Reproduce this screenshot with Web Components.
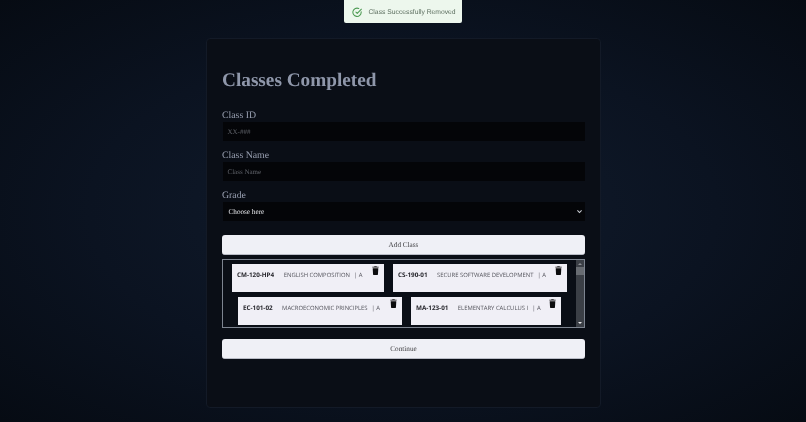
<!DOCTYPE html>
<html lang="en">
<head>
<meta charset="utf-8">
<title>Classes Completed</title>
<style>
  html, body { margin: 0; height: 422px; overflow: hidden; }
  body {
    background: radial-gradient(ellipse at center, #111c2d 0%, #0b1321 55%, #060b13 100%);
    font-family: "Liberation Serif", serif;
    text-rendering: geometricPrecision;
  }
  /* the reference is a soft, downscaled capture */
  toast-note, classes-form { filter: blur(0.3px); }
</style>
</head>
<body>
<toast-note>Class Successfully Removed</toast-note>
<classes-form></classes-form>

<script>
class ToastNote extends HTMLElement {
  constructor() {
    super();
    this.attachShadow({ mode: 'open' });
    this.shadowRoot.innerHTML = `
      <style>
        :host {
          position: absolute; top: 0; left: 344px;
          width: 118px; height: 23px; box-sizing: border-box;
          display: flex; align-items: center; gap: 6px; padding: 1px 0 0 8px;
          background: #edf7ed; border-radius: 0 0 2px 2px;
          font: 6.75px "Liberation Sans", sans-serif; color: #5d6f60;
        }
        svg { width: 10.5px; height: 10.5px; flex: none; }
      </style>
      <svg viewBox="0 0 24 24" fill="none" stroke="#4c9a52" stroke-width="2.4" stroke-linecap="round" stroke-linejoin="round">
        <path d="M21 11v1a9.5 9.5 0 1 1-5.6-8.6"/>
        <path d="M21.5 5 12 14.5l-3-3"/>
      </svg>
      <slot></slot>`;
  }
}

class ClassChip extends HTMLElement {
  constructor() {
    super();
    this.attachShadow({ mode: 'open' });
    this.shadowRoot.innerHTML = `
      <style>
        :host {
          display: flex; flex: none; position: relative; box-sizing: border-box;
          height: 28px; padding: 7px 0 0 5px;
          background: #f0eff6;
          font: 5.9px/8px "Open Sans", sans-serif; color: #54545c;
          white-space: nowrap;
        }
        b { color: #26262c; font-size: 6.3px; font-weight: 700; margin-right: 9.5px; }
        i { font-style: normal; margin-left: 4px; }
        svg { position: absolute; top: 2px; right: 5px; width: 7px; height: 9px; }
      </style>
      <b></b><span></span><i></i>
      <svg viewBox="0 0 8 10" fill="#0c0c0e"><path d="M2.8 0h2.4l.4.7H7.6V1.7H.4V.7h2zM.8 2.3h6.4l-.4 7.2q-.1.5-.6.5H1.8q-.5 0-.6-.5z"/></svg>`;
  }
  connectedCallback() {
    this.style.width = this.getAttribute('w') + 'px';
    this.shadowRoot.querySelector('b').textContent = this.getAttribute('code');
    this.shadowRoot.querySelector('span').textContent = this.getAttribute('name');
    this.shadowRoot.querySelector('i').textContent = '| ' + this.getAttribute('grade');
  }
}

class FormField extends HTMLElement {
  constructor() {
    super();
    this.attachShadow({ mode: 'open' });
    this.shadowRoot.innerHTML = `
      <style>
        :host { display: block; margin-bottom: 7px; padding-top: 1px; }
        label { display: block; font-size: 9.8px; line-height: 13px; color: #9aa1b2; }
        .box {
          height: 19px; margin-left: 1px; box-sizing: border-box; padding: 0 4.5px;
          display: flex; align-items: center; justify-content: space-between;
          background: #040508; font-size: 7px; color: #5f6269;
        }
        .box.select { color: #e4e6ea; font-size: 7.2px; padding: 0 2px 0 5.5px; }
        svg { width: 7px; height: 7px; }
      </style>
      <label></label>
      <div class="box"><span></span></div>`;
  }
  connectedCallback() {
    this.shadowRoot.querySelector('label').textContent = this.getAttribute('label');
    this.shadowRoot.querySelector('span').textContent = this.getAttribute('hint');
    if (this.hasAttribute('select')) {
      const box = this.shadowRoot.querySelector('.box');
      box.classList.add('select');
      box.insertAdjacentHTML('beforeend', '<svg viewBox="0 0 10 10" fill="none" stroke="#c8ccd2" stroke-width="1.6"><path d="M2 3.5 5 6.5 8 3.5"/></svg>');
    }
  }
}

class LightButton extends HTMLElement {
  constructor() {
    super();
    this.attachShadow({ mode: 'open' });
    this.shadowRoot.innerHTML = `
      <style>
        :host {
          display: flex; align-items: center; justify-content: center;
          height: 19px; border-radius: 3px;
          background: #eff0f6; border-bottom: 1px solid #b9bcc6;
          font-size: 7.2px; color: #3f3f42;
        }
      </style>
      <slot></slot>`;
  }
}

class ClassList extends HTMLElement {
  constructor() {
    super();
    this.attachShadow({ mode: 'open' });
    this.shadowRoot.innerHTML = `
      <style>
        :host {
          display: flex; height: 69px; box-sizing: border-box;
          border: 1px solid #7d8490; overflow: hidden;
        }
        .items { flex: 1; display: flex; flex-direction: column; gap: 5px; padding-top: 4px; }
        .row { display: flex; justify-content: center; gap: 9px; }
        .bar { width: 8px; flex: none; position: relative; background: #3b3f46; }
        .thumb { margin-top: 7px; height: 8px; background: #686c72; }
        .bar::before, .bar::after {
          content: ""; position: absolute; left: 2px;
          border-left: 2px solid transparent; border-right: 2px solid transparent;
        }
        .bar::before { top: 3px; border-bottom: 2px solid #8b8e94; }
        .bar::after { bottom: 3px; border-top: 2px solid #e8e8ea; }
      </style>
      <div class="items">
        <div class="row">
          <class-chip w="152" code="CM-120-HP4" name="ENGLISH COMPOSITION" grade="A"></class-chip>
          <class-chip w="174" code="CS-190-01" name="SECURE SOFTWARE DEVELOPMENT" grade="A"></class-chip>
        </div>
        <div class="row">
          <class-chip w="164" code="EC-101-02" name="MACROECONOMIC PRINCIPLES" grade="A"></class-chip>
          <class-chip w="150" code="MA-123-01" name="ELEMENTARY CALCULUS I" grade="A"></class-chip>
        </div>
      </div>
      <div class="bar"><div class="thumb"></div></div>`;
  }
}

class ClassesForm extends HTMLElement {
  constructor() {
    super();
    this.attachShadow({ mode: 'open' });
    this.shadowRoot.innerHTML = `
      <style>
        :host {
          display: block; box-sizing: border-box;
          width: 395px; height: 370px; margin: 38px 0 0 206px;
          padding: 29px 15px 0;
          background: #0a0e16; border: 1px solid #131a27; border-radius: 4px;
        }
        h1 { margin: 0 0 14px; font-size: 19.25px; line-height: 26px; font-weight: 700; color: #8f97aa; }
        .add { margin-top: 14px; }
        class-list { margin-top: 4px; }
        .next { margin-top: 11px; }
      </style>
      <h1>Classes Completed</h1>
      <form-field label="Class ID" hint="XX-###"></form-field>
      <form-field label="Class Name" hint="Class Name"></form-field>
      <form-field label="Grade" hint="Choose here" select></form-field>
      <light-button class="add">Add Class</light-button>
      <class-list></class-list>
      <light-button class="next">Continue</light-button>`;
  }
}

customElements.define('toast-note', ToastNote);
customElements.define('class-chip', ClassChip);
customElements.define('form-field', FormField);
customElements.define('light-button', LightButton);
customElements.define('class-list', ClassList);
customElements.define('classes-form', ClassesForm);
</script>
</body>
</html>
